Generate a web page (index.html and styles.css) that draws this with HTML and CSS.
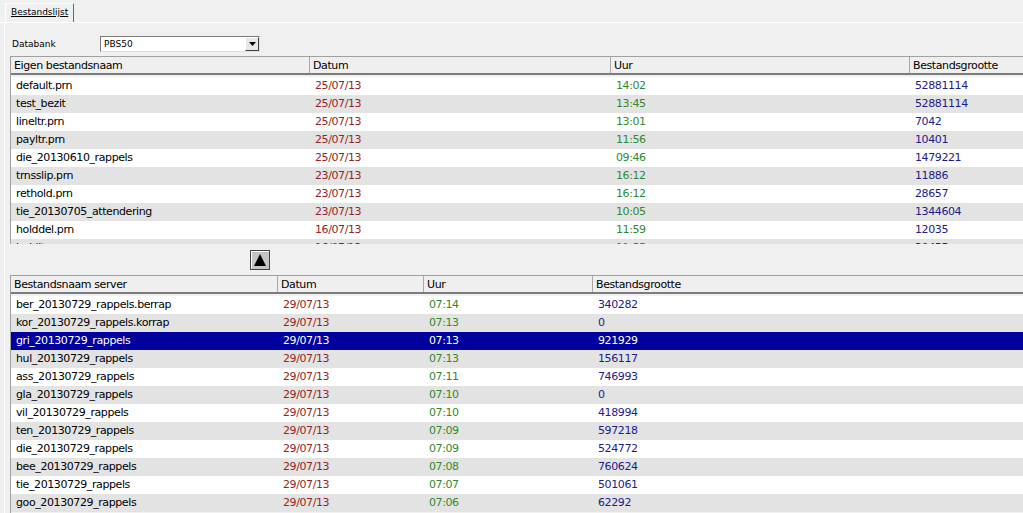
FILE: index.html
```html
<!DOCTYPE html>
<html>
<head>
<meta charset="utf-8">
<link rel="stylesheet" href="styles.css">
</head>
<body>
<div class="tabbar"><div class="tab"><span>Bestandslijst</span></div></div>
<div class="panel">
  <div class="dbrow">
    <label class="dblabel">Databank</label>
    <div class="combo"><span class="comboval">PBS50</span><span class="combobtn"><svg width="7" height="4" viewBox="0 0 7 4"><path d="M0 0h7L3.5 4z" fill="#000"/></svg></span></div>
  </div>

  <div class="grid top">
    <div class="head">
      <div class="hc">Eigen bestandsnaam</div><div class="hc">Datum</div><div class="hc">Uur</div><div class="hc">Bestandsgrootte</div>
    </div>
    <div class="body top-body">
      <div class="row"><span class="c name">default.prn</span><span class="c date">25/07/13</span><span class="c time">14:02</span><span class="c size">52881114</span></div>
      <div class="row"><span class="c name">test_bezit</span><span class="c date">25/07/13</span><span class="c time">13:45</span><span class="c size">52881114</span></div>
      <div class="row"><span class="c name">lineltr.prn</span><span class="c date">25/07/13</span><span class="c time">13:01</span><span class="c size">7042</span></div>
      <div class="row"><span class="c name">payltr.prn</span><span class="c date">25/07/13</span><span class="c time">11:56</span><span class="c size">10401</span></div>
      <div class="row"><span class="c name">die_20130610_rappels</span><span class="c date">25/07/13</span><span class="c time">09:46</span><span class="c size">1479221</span></div>
      <div class="row"><span class="c name">trnsslip.prn</span><span class="c date">23/07/13</span><span class="c time">16:12</span><span class="c size">11886</span></div>
      <div class="row"><span class="c name">rethold.prn</span><span class="c date">23/07/13</span><span class="c time">16:12</span><span class="c size">28657</span></div>
      <div class="row"><span class="c name">tie_20130705_attendering</span><span class="c date">23/07/13</span><span class="c time">10:05</span><span class="c size">1344604</span></div>
      <div class="row"><span class="c name">holddel.prn</span><span class="c date">16/07/13</span><span class="c time">11:59</span><span class="c size">12035</span></div>
      <div class="row"><span class="c name">holdltr.prn</span><span class="c date">16/07/13</span><span class="c time">11:55</span><span class="c size">30455</span></div>
    </div>
  </div>

  <div class="splitter"><button class="upbtn"><svg width="12" height="12" viewBox="0 0 12 12"><path d="M6 0L12 12H0z" fill="#000"/></svg></button></div>

  <div class="grid bottom">
    <div class="head">
      <div class="hc">Bestandsnaam server</div><div class="hc">Datum</div><div class="hc">Uur</div><div class="hc">Bestandsgrootte</div>
    </div>
    <div class="body bottom-body">
      <div class="row"><span class="c name">ber_20130729_rappels.berrap</span><span class="c date">29/07/13</span><span class="c time">07:14</span><span class="c size">340282</span></div>
      <div class="row"><span class="c name">kor_20130729_rappels.korrap</span><span class="c date">29/07/13</span><span class="c time">07:13</span><span class="c size">0</span></div>
      <div class="row sel"><span class="c name">gri_20130729_rappels</span><span class="c date">29/07/13</span><span class="c time">07:13</span><span class="c size">921929</span></div>
      <div class="row"><span class="c name">hul_20130729_rappels</span><span class="c date">29/07/13</span><span class="c time">07:13</span><span class="c size">156117</span></div>
      <div class="row"><span class="c name">ass_20130729_rappels</span><span class="c date">29/07/13</span><span class="c time">07:11</span><span class="c size">746993</span></div>
      <div class="row"><span class="c name">gla_20130729_rappels</span><span class="c date">29/07/13</span><span class="c time">07:10</span><span class="c size">0</span></div>
      <div class="row"><span class="c name">vil_20130729_rappels</span><span class="c date">29/07/13</span><span class="c time">07:10</span><span class="c size">418994</span></div>
      <div class="row"><span class="c name">ten_20130729_rappels</span><span class="c date">29/07/13</span><span class="c time">07:09</span><span class="c size">597218</span></div>
      <div class="row"><span class="c name">die_20130729_rappels</span><span class="c date">29/07/13</span><span class="c time">07:09</span><span class="c size">524772</span></div>
      <div class="row"><span class="c name">bee_20130729_rappels</span><span class="c date">29/07/13</span><span class="c time">07:08</span><span class="c size">760624</span></div>
      <div class="row"><span class="c name">tie_20130729_rappels</span><span class="c date">29/07/13</span><span class="c time">07:07</span><span class="c size">501061</span></div>
      <div class="row"><span class="c name">goo_20130729_rappels</span><span class="c date">29/07/13</span><span class="c time">07:06</span><span class="c size">62292</span></div>
    </div>
  </div>
</div>
</body>
</html>
```
FILE: styles.css
```css
html, body {
  margin: 0;
  padding: 0;
  background: #f0f0f0;
  width: 1023px;
  height: 513px;
  overflow: hidden;
  font-family: "DejaVu Sans", Verdana, sans-serif;
  font-size: 11px;
  color: #000;
}

.tabbar {
  height: 23px;
  padding-left: 5px;
  display: flex;
  align-items: flex-end;
  border-bottom: 1px solid #ffffff;
  box-sizing: border-box;
}

.tab {
  height: 19px;
  box-sizing: border-box;
  border-left: 1px solid #ffffff;
  border-top: 1px solid #ffffff;
  border-right: 1px solid #6a6a6a;
  padding: 3px 5px 0 5px;
  font-size: 9px;
  background: #f0f0f0;
}

.tab span {
  text-decoration: underline;
}

.panel {
  margin-left: 4px;
  border-left: 1px solid #ffffff;
  height: 490px;
  padding-left: 5px;
  display: flex;
  flex-direction: column;
}

.panel > * {
  flex-shrink: 0;
}

.dbrow {
  height: 33px;
  display: flex;
  align-items: flex-start;
  padding-top: 13px;
  box-sizing: border-box;
}

.dblabel {
  width: 88px;
  padding-left: 2px;
  margin-top: 3px;
  font-size: 9px;
}

.combo {
  width: 160px;
  height: 16px;
  box-sizing: border-box;
  border: 1px solid #7a7a7a;
  border-right-color: #e0e0e0;
  border-bottom-color: #e0e0e0;
  background: #fff;
  display: flex;
  align-items: center;
  justify-content: space-between;
}

.comboval {
  font-size: 9px;
  padding-left: 3px;
}

.combobtn {
  width: 14px;
  height: 14px;
  box-sizing: border-box;
  border: 1px solid #fff;
  border-right-color: #404040;
  border-bottom-color: #404040;
  background: #e8e8e8;
  display: flex;
  align-items: center;
  justify-content: center;
}

.grid {
  border-left: 1px solid #a0a0a0;
  border-top: 1px solid #a0a0a0;
  background: #f0f0f0;
  letter-spacing: -0.4px;
}

.head {
  display: grid;
  height: 18px;
  box-sizing: border-box;
  border-bottom: 2px solid #7c7c7c;
  background: #efefef;
}

.top .head, .top .row {
  grid-template-columns: 299px 301px 299px 1fr;
}

.bottom .head, .bottom .row {
  grid-template-columns: 267px 146px 169px 1fr;
}

.hc {
  padding-left: 3px;
  line-height: 17px;
  border-right: 1px solid #a8a8a8;
  white-space: nowrap;
  overflow: hidden;
}

.hc:last-child {
  border-right: none;
}

.body {
  overflow: hidden;
  padding-top: 2px;
}

.top-body {
  height: 167px;
}

.bottom-body {
  height: 230px;
}

.row {
  display: grid;
  height: 18px;
  line-height: 18px;
  background: #ffffff;
}

.row:nth-child(even) {
  background: #e3e3e3;
}

.c {
  padding-left: 5px;
  white-space: nowrap;
  overflow: hidden;
}

.date { color: #982323; }
.time { color: #2e8b2e; }
.size { color: #1c1c8a; }

.row.sel {
  background: #00009e;
}

.row.sel .c {
  color: #ffffff;
}

.splitter {
  height: 31px;
  display: flex;
  align-items: center;
  padding-left: 240px;
}

.upbtn {
  width: 20px;
  height: 20px;
  padding: 0;
  margin: 0;
  border: 1px solid #404040;
  background: #c4c4c4;
  display: flex;
  align-items: center;
  justify-content: center;
  box-shadow: inset 1px 1px 0 #ffffff;
}
```
